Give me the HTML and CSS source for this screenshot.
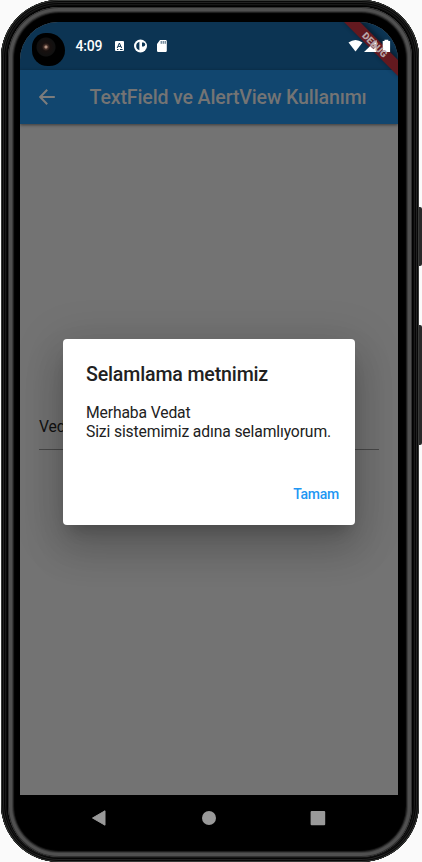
FILE: index.html
```html
<!DOCTYPE html>
<html lang="tr">
<head>
<meta charset="utf-8">
<title>TextField ve AlertView Kullanımı</title>
<link rel="stylesheet" href="styles.css">
</head>
<body>
<div class="phone">
  <i class="side-key power"></i>
  <i class="side-key volume"></i>
  <div class="bezel">
    <div class="screen">
      <header class="status">
        <span class="camera"></span>
        <span class="clock">4:09</span>
        <svg class="notes" width="56" height="14" viewBox="0 0 56 14">
          <rect x="1" y="2" width="9" height="10" rx="1" fill="#fff"/>
          <path d="M3.2 9 5.4 4l2.2 5M4.1 7.4h2.7M3 10.5h1.4M6 10.5h2.6" fill="none" stroke="#0c3453" stroke-width="1"/>
          <circle cx="26.5" cy="7" r="6.5" fill="#fff"/>
          <path d="M25.4 2.8q-3.2 1-3.2 4.2t3.2 4.2z" fill="#0c3453"/>
          <path d="M28 3.6h1.6q1.6.4 1.6 2t-1.6 2H28z" fill="#0c3453"/>
          <path d="M46.5 1h7q1.3 0 1.3 1.3v9.4q0 1.3-1.3 1.3h-7.2q-1.3 0-1.3-1.3V5L48 1z" transform="translate(-2)" fill="#fff"/>
          <path d="M47.2 2v2.8M49.2 2v2.8M51.2 2v2.8" stroke="#0c3453" stroke-width=".8"/>
        </svg>
      </header>
      <div class="appbar">
        <svg width="16" height="16" viewBox="0 0 16 16" fill="none" stroke="#7c7c7c" stroke-width="2"><path d="M15.8 8H1.5M8.2 .8 1.2 8l7 7.2"/></svg>
        <h1>TextField ve AlertView Kullanımı</h1>
      </div>
      <main class="content">
        <div class="field">Vedat</div>
        <section class="dialog">
          <h2>Selamlama metnimiz</h2>
          <p>Merhaba Vedat<br>Sizi sistemimiz adına selamlıyorum.</p>
          <div class="actions"><button>Tamam</button></div>
        </section>
      </main>
      <svg class="corner" width="60" height="60" viewBox="338 22 60 60">
        <defs><filter id="soft" x="-30%" y="-30%" width="160%" height="160%"><feGaussianBlur stdDeviation="2.5"/></filter></defs>
        <path d="M343 20 400 77V58L362 20z" fill="#000" opacity=".4" filter="url(#soft)"/>
        <path d="M344 22h16L398 60v16z" fill="#63191f"/>
        <path d="M348.5 42.6q7-5.3 14 0L355.5 51.5z" fill="#fff"/>
        <path d="M364 52 376.5 40v12z" fill="#fff"/>
        <path d="M384.5 39.7h3.8V41h1.8v11h-7.4V41h1.8z" fill="#fff"/>
        <path d="M370.3 46.5 373 44l3 3-2.5 2.3z" fill="#63191f" opacity=".7"/>
        <text class="debug" transform="translate(375 44.8) rotate(45)" x="0" y="3.5" text-anchor="middle" textLength="31" lengthAdjust="spacingAndGlyphs">DEBUG</text>
      </svg>
    </div>
    <nav class="nav">
      <svg width="16" height="18" viewBox="0 0 16 18"><path d="M14 1.8v14.4L1.5 9z" fill="#999" stroke="#999" stroke-linejoin="round"/></svg>
      <svg width="16" height="18" viewBox="0 0 16 18"><circle cx="8" cy="9" r="7" fill="#999"/></svg>
      <svg width="16" height="18" viewBox="0 0 16 18"><rect x=".6" y="2" width="14.6" height="14.3" rx="1" fill="#999"/></svg>
    </nav>
  </div>
</div>
</body>
</html>
```
FILE: styles.css
```css
* { box-sizing: border-box; margin: 0; }
body { width: 422px; height: 862px; overflow: hidden; background: #fafafa; font-family: Roboto, sans-serif; }
svg { display: block; }
.phone {
  position: relative;
  width: 418px;
  height: 862px;
  margin-left: 1px;
  padding: 7px;
  border-radius: 58px;
  background: #000;
  box-shadow: inset 0 0 0 1px #383a38, inset 0 0 0 2px #080808, inset 0 0 0 3px #222, inset 0 0 0 4px #050505, inset 0 0 0 5px #191919, inset 0 0 0 6px #080808;
}
.bezel {
  display: flex;
  flex-direction: column;
  height: 850px;
  padding: 15px 14px 0 12px;
  border-radius: 51px;
  background: #000;
  box-shadow: inset 0 0 0 1px #303030, inset 0 0 0 4px #505050, inset 0 0 0 5px #3c3c3c, inset 0 0 1px 6px #222;
}
.side-key { position: absolute; left: 418px; width: 3px; border-radius: 0 2px 2px 0; background: #292929; }
.power { top: 207px; height: 59px; }
.volume { top: 325px; height: 120px; }
.screen {
  position: relative;
  flex: none;
  display: flex;
  flex-direction: column;
  width: 378px;
  height: 773px;
  overflow: hidden;
  border-radius: 38px 38px 0 0;
  background: #737373;
}
.status { display: flex; align-items: flex-start; height: 48px; background: #0c3453; }
.camera {
  flex: none;
  width: 33px;
  height: 33px;
  margin: 11px 0 0 12px;
  border-radius: 44% 56% 50% 50%;
  background: radial-gradient(circle at 14px 14px, #b09080 0 1px, #4a342c 2px, #17100f 4px, #101010 9px, #000 10px);
}
.clock { width: 38px; margin: 16px 0 0 10.5px; font-size: 14px; letter-spacing: -.2px; line-height: 16px; font-weight: 500; color: #fff; }
.notes { margin: 17px 0 0 0; }
.appbar {
  position: relative;
  flex: none;
  display: flex;
  align-items: center;
  height: 54px;
  padding-left: 19px;
  background: #11466f;
  box-shadow: 0 1px 3px rgba(0, 0, 0, .5);
}
.appbar h1 { margin: 1px 0 0 34.5px; font-size: 19.6px; letter-spacing: -.15px; font-weight: 500; line-height: 24px; white-space: nowrap; color: #747474; }
.content { position: relative; flex: 1; padding: 290px 19px 0; }
.field { height: 36px; border-bottom: 1px solid #484848; font-size: 15.7px; letter-spacing: -.12px; line-height: 25px; color: #111; }
.dialog {
  position: absolute;
  left: 43px;
  top: 215px;
  width: 292px;
  height: 186px;
  padding: 24px 23px 23px;
  border-radius: 4px;
  background: #fff;
  color: #212121;
  box-shadow: 0 11px 15px -7px rgba(0, 0, 0, .2), 0 24px 38px 3px rgba(0, 0, 0, .14), 0 9px 46px 8px rgba(0, 0, 0, .12);
}
.dialog h2 { font-size: 19.6px; letter-spacing: -.16px; font-weight: 500; line-height: 24px; white-space: nowrap; }
.dialog p { margin-top: 16px; font-size: 15.7px; letter-spacing: -.13px; line-height: 19px; white-space: nowrap; }
.actions { display: flex; justify-content: flex-end; margin: 44px -7px 0 0; }
.actions button { padding: 0; border: 0; background: none; font: 500 14px/18px Roboto, sans-serif; letter-spacing: -.25px; color: #2196f3; }
.corner { position: absolute; top: 0; right: 0; }
.debug { font: 900 9.6px Roboto, sans-serif; fill: #b9a5a7; }
.nav { display: flex; justify-content: space-between; padding: 14px 72px 0 71px; }
```
